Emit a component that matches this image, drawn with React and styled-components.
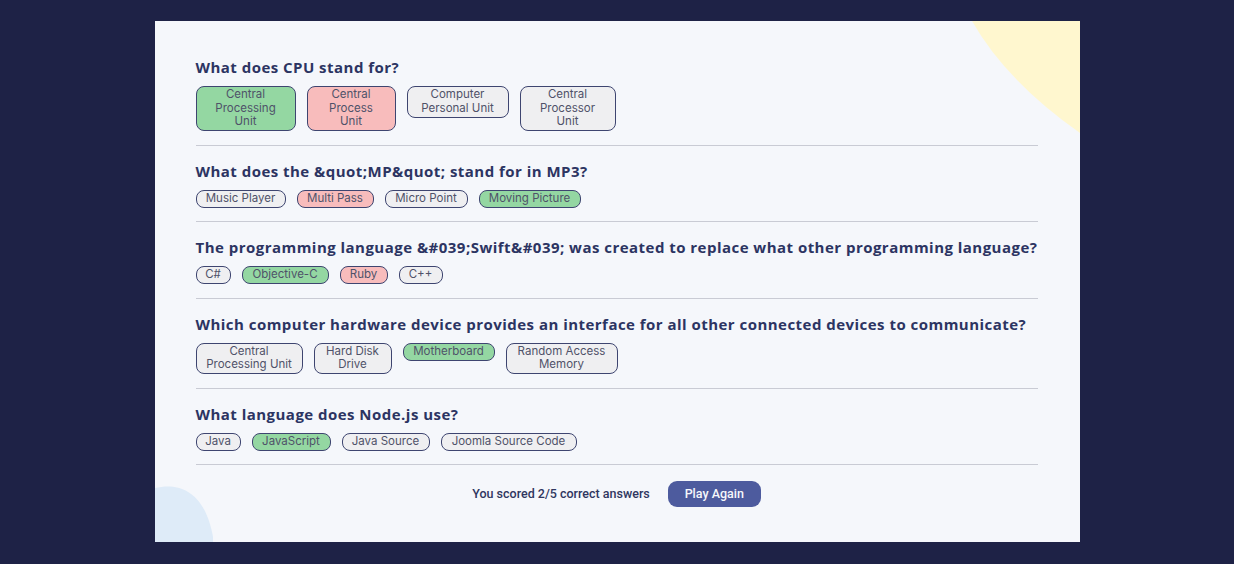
import React from 'react';
import styled, { createGlobalStyle } from 'styled-components';

const GlobalStyle = createGlobalStyle`
  html, body {
    margin: 0;
    padding: 0;
    background: #1e2246;
  }
  body {
    font-family: Inter, "Noto Sans", sans-serif;
  }
`;

const Page = styled.div`
  min-height: 564px;
  display: flex;
  justify-content: center;
  padding-top: 21px;
  box-sizing: border-box;
`;

const Card = styled.main`
  position: relative;
  overflow: hidden;
  width: 925px;
  height: 521px;
  box-sizing: border-box;
  background: #f5f7fb;
  padding: 21px 42px 0 41px;
`;

const BlobTop = styled.svg`
  position: absolute;
  top: 0;
  right: 0;
`;

const BlobBottom = styled.svg`
  position: absolute;
  left: 0;
  bottom: 0;
`;

const Content = styled.div`
  position: relative;
`;

const Question = styled.section`
  padding: 15px 0 13.5px;
  border-bottom: 1px solid #c9cbd4;
`;

const Title = styled.h2`
  margin: 0 0 9px;
  font-family: "Open Sans", Lato, sans-serif;
  font-weight: 700;
  font-size: 15px;
  line-height: 20px;
  letter-spacing: 0.47px;
  color: #2c3462;
  white-space: nowrap;
`;

const Answers = styled.div`
  display: flex;
  align-items: flex-start;
  gap: 11px;
`;

const fills = {
  correct: '#94d7a2',
  wrong: '#f8bcbc',
  none: '#efeff1',
};

const Answer = styled.button`
  box-sizing: border-box;
  margin: 0;
  padding: 1.25px 8px;
  border: 1px solid #3e4570;
  border-radius: 8px;
  background: ${({ $state }) => fills[$state]};
  font-family: Inter, "Noto Sans", sans-serif;
  font-size: 11.5px;
  line-height: 13.5px;
  color: #4f5269;
  text-align: center;
  white-space: pre-line;
`;

const Footer = styled.footer`
  display: flex;
  justify-content: center;
  align-items: center;
  gap: 18px;
  padding-top: 15.5px;
`;

const Score = styled.p`
  margin: 0;
  font-family: Roboto, Inter, sans-serif;
  font-weight: 500;
  font-size: 12.5px;
  color: #2f3660;
`;

const PlayButton = styled.button`
  width: 93px;
  height: 26px;
  border: none;
  border-radius: 9px;
  background: #4d5b9e;
  color: #f5f7fb;
  font-family: Roboto, Inter, sans-serif;
  font-weight: 500;
  font-size: 12.5px;
`;

const questions = [
  {
    q: 'What does CPU stand for?',
    a: [
      ['Central\nProcessing\nUnit', 'correct', 100],
      ['Central\nProcess\nUnit', 'wrong', 89],
      ['Computer\nPersonal Unit', 'none', 102],
      ['Central\nProcessor\nUnit', 'none', 96],
    ],
  },
  {
    q: 'What does the &quot;MP&quot; stand for in MP3?',
    a: [
      ['Music Player', 'none', 90],
      ['Multi Pass', 'wrong', 77],
      ['Micro Point', 'none', 83],
      ['Moving Picture', 'correct', 102],
    ],
  },
  {
    q: 'The programming language &#039;Swift&#039; was created to replace what other programming language?',
    a: [
      ['C#', 'none', 35],
      ['Objective-C', 'correct', 87],
      ['Ruby', 'wrong', 48],
      ['C++', 'none', 44],
    ],
  },
  {
    q: 'Which computer hardware device provides an interface for all other connected devices to communicate?',
    a: [
      ['Central\nProcessing Unit', 'none', 107],
      ['Hard Disk\nDrive', 'none', 78],
      ['Motherboard', 'correct', 92],
      ['Random Access\nMemory', 'none', 112],
    ],
  },
  {
    q: 'What language does Node.js use?',
    a: [
      ['Java', 'none', 45],
      ['JavaScript', 'correct', 79],
      ['Java Source', 'none', 88],
      ['Joomla Source Code', 'none', 136],
    ],
  },
];

export default function App() {
  return (
    <>
      <GlobalStyle />
      <Page>
        <Card>
          <BlobTop width="110" height="115" viewBox="0 0 110 115">
            <path d="M2 0 Q36 60 110 112 L110 0 Z" fill="#fff7cf" />
          </BlobTop>
          <BlobBottom width="70" height="60" viewBox="0 0 70 60">
            <path d="M0 6 C25 0 50 10 58 55 L58 60 L0 60 Z" fill="#deebf8" />
          </BlobBottom>
          <Content>
            {questions.map((item) => (
              <Question key={item.q}>
                <Title>{item.q}</Title>
                <Answers>
                  {item.a.map(([text, state, w]) => (
                    <Answer key={text} $state={state} style={{ width: w }}>
                      {text}
                    </Answer>
                  ))}
                </Answers>
              </Question>
            ))}
            <Footer>
              <Score>You scored 2/5 correct answers</Score>
              <PlayButton>Play Again</PlayButton>
            </Footer>
          </Content>
        </Card>
      </Page>
    </>
  );
}
